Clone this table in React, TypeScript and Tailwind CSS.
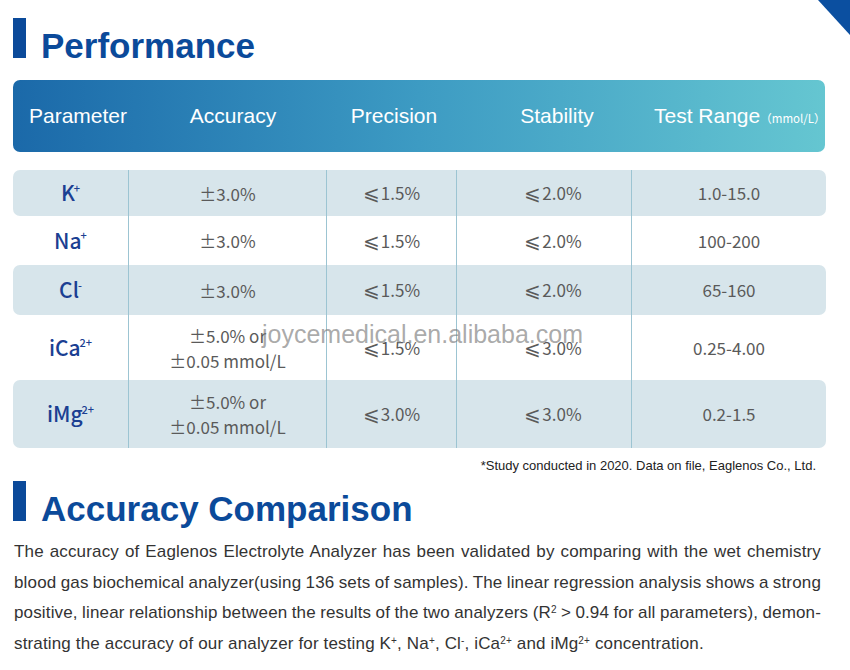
const SANS = 'font-["Liberation_Sans",Arial,sans-serif]'
const CJK = 'font-["Noto_Sans_CJK_SC","Noto_Sans",sans-serif]'

type Row = {
  name: string
  sup: string
  accuracy: string[]
  precision: string
  stability: string
  range: string
  height: string
  shaded: boolean
}

const ROWS: Row[] = [
  { name: 'K', sup: '+', accuracy: ['±3.0%'], precision: '1.5%', stability: '2.0%', range: '1.0-15.0', height: 'h-[46px]', shaded: true },
  { name: 'Na', sup: '+', accuracy: ['±3.0%'], precision: '1.5%', stability: '2.0%', range: '100-200', height: 'h-[49px]', shaded: false },
  { name: 'Cl', sup: '-', accuracy: ['±3.0%'], precision: '1.5%', stability: '2.0%', range: '65-160', height: 'h-[50px]', shaded: true },
  {
    name: 'iCa',
    sup: '2+',
    accuracy: ['±5.0% or', '±0.05 mmol/L'],
    precision: '1.5%',
    stability: '3.0%',
    range: '0.25-4.00',
    height: 'h-[65px]',
    shaded: false,
  },
  {
    name: 'iMg',
    sup: '2+',
    accuracy: ['±5.0% or', '±0.05 mmol/L'],
    precision: '3.0%',
    stability: '3.0%',
    range: '0.2-1.5',
    height: 'h-[68px]',
    shaded: true,
  },
]

const CELL = 'flex items-center justify-center border-l border-[#9cc4d2] text-[17px] text-[#5a5a5a]'

/** The slanted "less than or equal" falls back to a smaller face; bump it to sit level with the digits. */
function AtMost({ value }: { value: string }) {
  return (
    <span>
      <span className="mr-px text-[20px] leading-none">⩽</span>
      {value}
    </span>
  )
}

function SectionTitle({ children }: { children: string }) {
  return (
    <div className="flex h-[40px] items-end gap-[15px] pl-[13px]">
      <span className="h-[40px] w-[13px] shrink-0 bg-[#0b4a9a]" />
      <h2 className={`${SANS} text-[35px] leading-[24px] font-bold text-[#0b4a9a]`}>{children}</h2>
    </div>
  )
}

function TableRow({ row }: { row: Row }) {
  return (
    <div
      className={`grid grid-cols-[115px_198px_130px_175px_1fr] rounded-[7px] ${row.height} ${
        row.shaded ? 'bg-[#d7e5eb]' : 'bg-white'
      } ${CJK}`}
    >
      <div className="flex items-center justify-center text-[21px] font-medium text-[#1b3f92]">
        {row.name}
        <sup className="-ml-px text-[11px]">{row.sup}</sup>
      </div>
      <div className={`${CELL} flex-col leading-[25px]`}>
        {row.accuracy.map((line) => (
          <span key={line}>{line}</span>
        ))}
      </div>
      <div className={CELL}>
        <AtMost value={row.precision} />
      </div>
      <div className={`${CELL} pl-[18px]`}>
        <AtMost value={row.stability} />
      </div>
      <div className={CELL}>{row.range}</div>
    </div>
  )
}

/**
 * One line of the justified paragraph; the reference breaks lines by hand, hyphen and all.
 * Word spacing is pulled in a little so the long lines fit before justify spreads them back out.
 */
function Line({ children, last }: { children: React.ReactNode; last?: boolean }) {
  return (
    <div
      className={`whitespace-nowrap ${
        last ? 'text-left' : 'text-justify [word-spacing:-2px] [text-align-last:justify]'
      }`}
    >
      {children}
    </div>
  )
}

const Sup = ({ children }: { children: string }) => (
  <sup className="text-[10px]">{children}</sup>
)

export default function App() {
  return (
    <div className="relative h-[670px] w-[850px] overflow-hidden bg-white">
      <div className="absolute top-0 right-0 h-[35px] w-[32px] bg-[#0b4fa0] [clip-path:polygon(0_0,100%_0,100%_100%)]" />

      <div className="pt-[18px]">
        <SectionTitle>Performance</SectionTitle>
      </div>

      <div
        className={`mt-[22px] ml-[13px] grid h-[72px] w-[812px] grid-cols-[130px_180px_142px_184px_1fr] items-center rounded-[7px] bg-linear-to-r from-[#1b69a9] via-[#3d9bc3] to-[#65c6d1] text-[21px] text-white ${SANS}`}
      >
        <span className="text-center">Parameter</span>
        <span className="text-center">Accuracy</span>
        <span className="text-center">Precision</span>
        <span className="text-center">Stability</span>
        <span className="pl-[5px] whitespace-nowrap">
          Test Range<span className={`text-[11.5px] ${CJK}`}>（mmol/L）</span>
        </span>
      </div>

      <div className="mt-[18px] ml-[13px] w-[813px]">
        {ROWS.map((row) => (
          <TableRow key={row.name} row={row} />
        ))}
      </div>

      <p className={`mt-[10px] w-[816px] text-right text-[13px] leading-[16px] text-[#222] ${SANS}`}>
        *Study conducted in 2020. Data on file, Eaglenos Co., Ltd.
      </p>

      <div className="mt-[7px]">
        <SectionTitle>Accuracy Comparison</SectionTitle>
      </div>

      <div
        className={`mt-[16px] ml-[14px] w-[807px] text-[17px] leading-[30.7px] tracking-[0.15px] text-[#333] ${SANS}`}
      >
        <Line>
          The accuracy of Eaglenos Electrolyte Analyzer has been validated by comparing with the wet chemistry
        </Line>
        <Line>
          blood gas biochemical analyzer(using 136 sets of samples). The linear regression analysis shows a strong
        </Line>
        <Line>
          positive, linear relationship between the results of the two analyzers (R<Sup>2</Sup> &gt; 0.94 for all
          parameters), demon-
        </Line>
        <Line last>
          strating the accuracy of our analyzer for testing K<Sup>+</Sup>, Na<Sup>+</Sup>, Cl<Sup>-</Sup>, iCa
          <Sup>2+</Sup> and iMg<Sup>2+</Sup> concentration.
        </Line>
      </div>

      <span
        className={`pointer-events-none absolute top-[322px] left-[262px] text-[25px] leading-none text-[#7a7a7a]/65 ${SANS}`}
      >
        joycemedical.en.alibaba.com
      </span>
    </div>
  )
}
